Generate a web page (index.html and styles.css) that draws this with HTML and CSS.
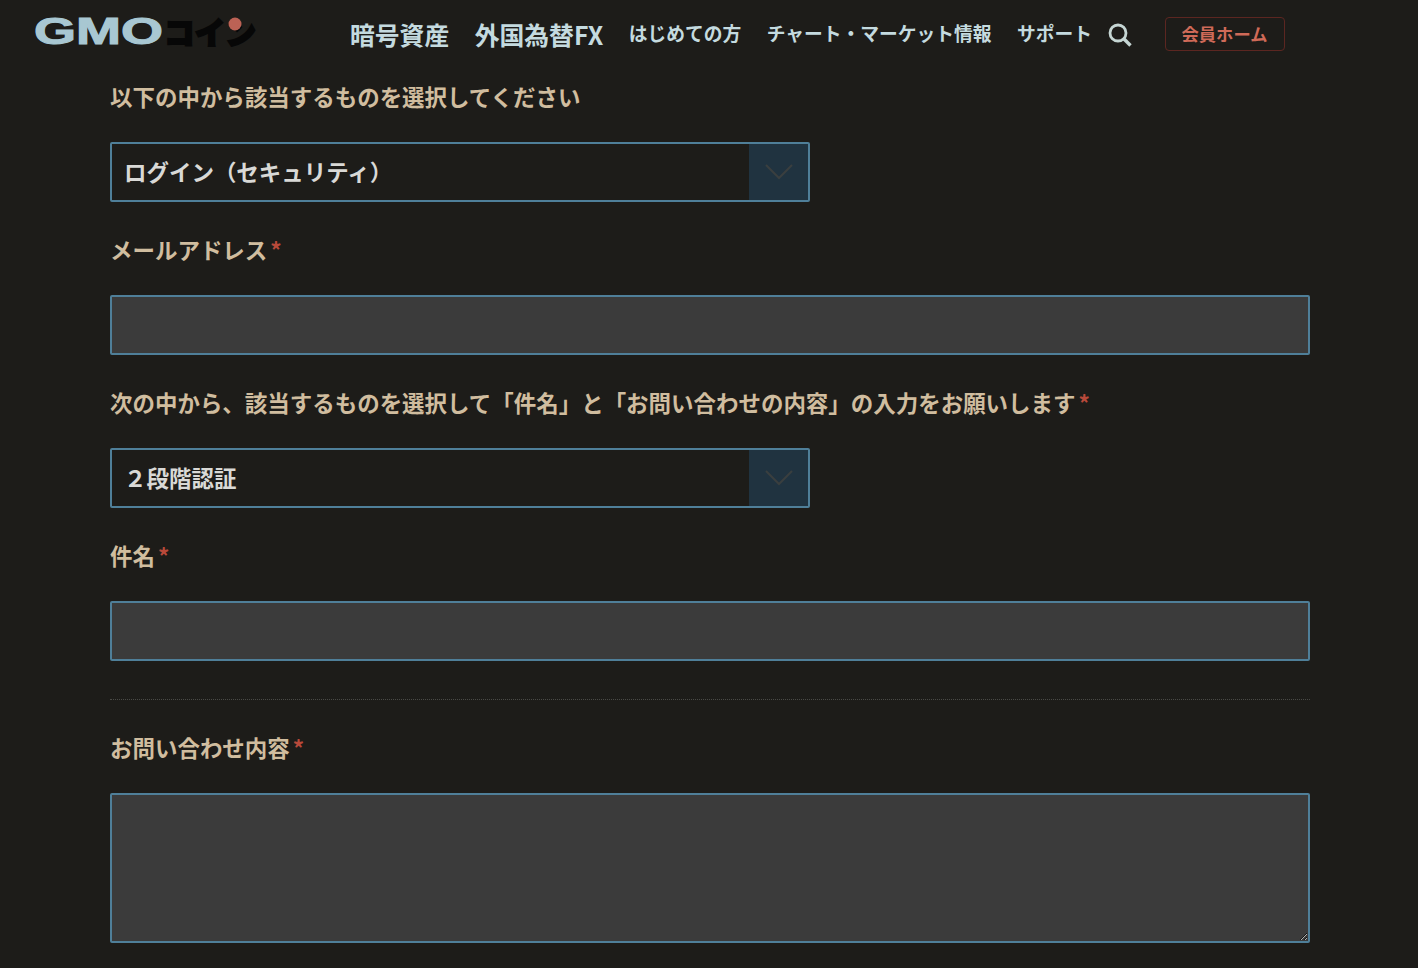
FILE: index.html
```html
<!DOCTYPE html>
<html lang="ja">
<head>
<meta charset="utf-8">
<title>お問い合わせ</title>
<link rel="stylesheet" href="styles.css">
</head>
<body>
<header class="site_header">
	<a class="logo" href="#">
		<svg class="logo_svg" width="222" height="30" viewBox="0 0 222 30">
			<text class="logo_gmo" x="-1" y="27" textLength="129" lengthAdjust="spacingAndGlyphs">GMO</text>
			<text class="logo_coin" x="129" y="27" textLength="92" lengthAdjust="spacingAndGlyphs">コイン</text>
			<circle cx="200" cy="7" r="6.5" fill="#bc6255"/>
		</svg>
	</a>
	<nav class="main_nav">
		<a class="nav_big" href="#">暗号資産</a>
		<a class="nav_big" href="#">外国為替FX</a>
		<a class="nav_small" href="#">はじめての方</a>
		<a class="nav_small" href="#">チャート・マーケット情報</a>
		<a class="nav_small" href="#">サポート</a>
	</nav>
	<svg class="search_icon" width="24" height="24" viewBox="0 0 24 24">
		<circle cx="10" cy="10" r="8" fill="none" stroke="#c5d5d3" stroke-width="2.8"/>
		<line x1="15.8" y1="15.8" x2="22.5" y2="22.5" stroke="#c5d5d3" stroke-width="3.4"/>
	</svg>
	<a class="member_btn" href="#">会員ホーム</a>
</header>

<form class="contact_form">
	<div class="field">
		<label class="field_label">以下の中から該当するものを選択してください</label>
		<div class="select_box">
			<select class="field_select"><option>ログイン（セキュリティ）</option></select>
			<span class="select_arrow"><svg width="28" height="16" viewBox="0 0 28 16"><polyline points="1,1 14,14 27,1" fill="none" stroke="#3a3f3f" stroke-width="2"/></svg></span>
		</div>
	</div>
	<div class="field">
		<label class="field_label">メールアドレス<span class="req">*</span></label>
		<input class="field_input" type="text">
	</div>
	<div class="field">
		<label class="field_label">次の中から、該当するものを選択して「件名」と「お問い合わせの内容」の入力をお願いします<span class="req">*</span></label>
		<div class="select_box">
			<select class="field_select"><option>２段階認証</option></select>
			<span class="select_arrow"><svg width="28" height="16" viewBox="0 0 28 16"><polyline points="1,1 14,14 27,1" fill="none" stroke="#3a3f3f" stroke-width="2"/></svg></span>
		</div>
	</div>
	<div class="field field_last">
		<label class="field_label">件名<span class="req">*</span></label>
		<input class="field_input" type="text">
	</div>
	<hr class="divider">
	<div class="field">
		<label class="field_label">お問い合わせ内容<span class="req">*</span></label>
		<textarea class="field_textarea"></textarea>
	</div>
</form>
</body>
</html>
```

FILE: styles.css
```css
* {margin: 0; padding: 0; box-sizing: border-box;}
html, body {height: 100%; overflow: hidden;}
body {background: #1d1c19; font-family: "Noto Sans CJK JP", "Noto Sans", sans-serif; color: #d0bd9f;}
a {text-decoration: none; color: inherit;}

.site_header {display: flex; align-items: center; height: 68px; padding-left: 35px;}
.logo {display: block; width: 222px; height: 30px; margin-top: -5px;}
.logo_svg {overflow: visible;}
.logo_gmo {font-family: "Liberation Sans", sans-serif; font-size: 36px; font-weight: 700; fill: #a8c7d2; stroke: #a8c7d2; stroke-width: 1px;}
.logo_coin {font-family: "Noto Sans CJK JP", sans-serif; font-size: 31px; font-weight: 900; fill: #070707; stroke: #070707; stroke-width: 2px;}

.main_nav {display: flex; align-items: center; gap: 25.5px; margin: -2px 0 0 93px; color: #c4dadf; font-weight: 700;}
.nav_big {font-size: 24.8px; line-height: 36px; margin-top: 1px;}
.nav_small {font-size: 18.75px; line-height: 34px; margin-top: -1px;}

.search_icon {margin-left: 15.5px; margin-top: 2px;}
.member_btn {display: block; width: 120px; height: 34px; margin-left: 33px; border: 1px solid #5c2621; border-radius: 4px; color: #cf6a58; font-size: 17.28px; font-weight: 700; line-height: 31px; text-align: center;}

.contact_form {width: 1200px; margin-left: 110px; padding-top: 12px;}
.field {margin-bottom: 31px;}
.field_last {margin-bottom: 38px;}
.field_label {display: block; height: 34px; margin-bottom: 28px; font-size: 22.47px; font-weight: 700; line-height: 32px; white-space: nowrap;}
.req {color: #b8493a; margin-left: 3px;}

.select_box {position: relative; width: 700px; height: 60px;}
.field_select {display: block; width: 100%; height: 60px; padding: 0 0 2px 12px; background: #1d1c19; border: 2px solid #4f7f99; border-radius: 2px; color: #d9d9d6; font-family: inherit; font-size: 22.47px; font-weight: 700; appearance: none; outline: none;}
.select_arrow {position: absolute; top: 2px; right: 2px; bottom: 2px; width: 59px; display: flex; align-items: center; justify-content: center; background: #203340; pointer-events: none;}

.field_input {display: block; width: 100%; height: 60px; background: #3b3b3b; border: 2px solid #4f7f99; border-radius: 2px; outline: none;}
.field_textarea {display: block; width: 100%; height: 150px; background: #3b3b3b; border: 2px solid #4f7f99; border-radius: 2px; outline: none; color-scheme: dark;}

.divider {height: 0; border: none; border-top: 1px dotted #4a4a46; margin-bottom: 31px;}
```
